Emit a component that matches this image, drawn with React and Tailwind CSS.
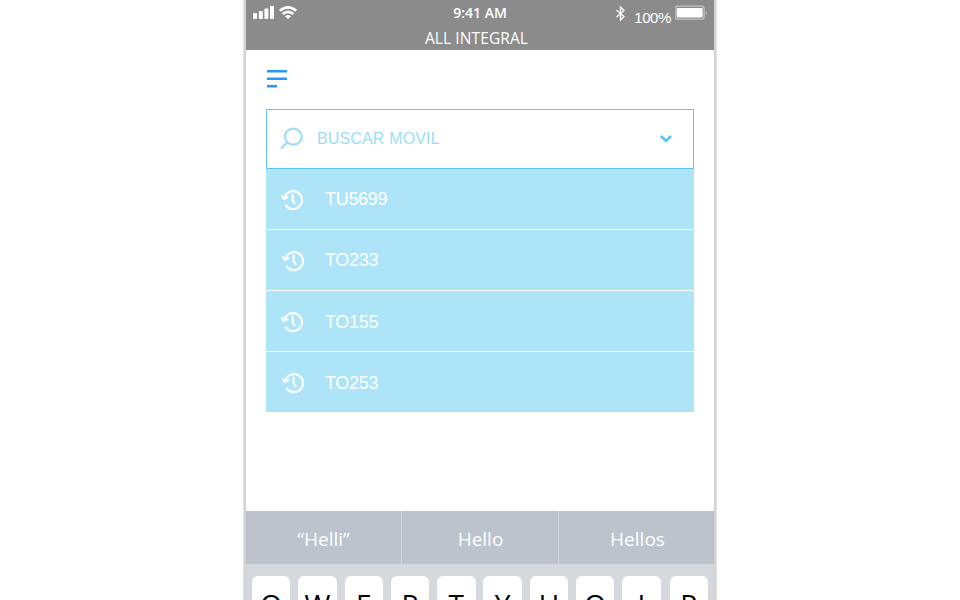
const vehicles = [
  { id: 'TU5699', icon: 'ml-[14.5px]', label: 'ml-[22.5px]' },
  { id: 'TO233', icon: 'ml-4', label: 'ml-[21px]' },
  { id: 'TO155', icon: 'ml-[14.5px]', label: 'ml-[22.5px] pt-[2px]' },
  { id: 'TO253', icon: 'ml-4', label: 'ml-[21px] pt-[2px]' },
];

const keys = ['Q', 'W', 'E', 'R', 'T', 'Y', 'U', 'O', 'I', 'P'];

function HistoryIcon({ className }) {
  return (
    <svg className={`mt-[2px] h-[22px] w-[22px] shrink-0 ${className}`} viewBox="0 0 22 22" fill="none" stroke="#fff" strokeWidth="2.1">
      <path d="M3.3 9A9 9 0 1 1 4.4 15.9" />
      <path d="M0.4 6.5L3 9.9L7.2 7.8" />
      <path d="M11.6 4.8V11.2L14.1 14.9" />
    </svg>
  );
}

function StatusBar() {
  return (
    <header className="flex h-[50px] flex-col bg-[#8b8b8b] font-['Open_Sans','Noto_Sans',sans-serif] text-white">
      <div className="flex h-[27px]">
        <div className="flex w-[156px] items-start pt-[6px] pl-[7px]">
          <svg className="h-[13px] w-[21px]" viewBox="0 0 21 13" fill="#fff">
            <rect x="0" y="7" width="4" height="6" rx="1" />
            <rect x="5.8" y="5" width="4" height="8" rx="1" />
            <rect x="11.4" y="2.5" width="4" height="10.5" rx="1" />
            <rect x="17" y="0" width="4" height="13" rx="1" />
          </svg>
          <svg className="ml-[5px] h-[13px] w-[18px]" viewBox="0 0 18 13" fill="none" stroke="#fff" strokeWidth="2.7">
            <path d="M0.8 4.7Q9 -2.1 17.2 4.7" />
            <path d="M3.7 8.1Q9 3.5 14.3 8.1" />
            <path d="M6 10.2Q9 7.8 12 10.2L9 13Z" fill="#fff" stroke="none" />
          </svg>
        </div>
        <div className="flex w-[156px] justify-center pt-[2px]">
          <span className="text-[14px] leading-[21px] font-semibold whitespace-nowrap">9:41 AM</span>
        </div>
        <div className="flex w-[156px] justify-end pr-[6px]">
          <svg className="mt-[6px] mr-[9px] h-[15px] w-[9px]" viewBox="0 0 9 15" fill="none" stroke="#fff" strokeWidth="1.3">
            <path d="M0.5 4L8 10.5L4.5 14V1L8 4.5L0.5 11" />
          </svg>
          <span className="mt-[8px] mr-[4px] font-['Liberation_Sans',sans-serif] text-[15px] leading-5 tracking-[-0.4px] whitespace-nowrap">100%</span>
          <svg className="mt-[5px] h-[15px] w-[33px]" viewBox="0 0 33 15" fill="none">
            <rect x="0.1" y="1.2" width="29" height="13" rx="2.5" stroke="#c4c4c4" strokeWidth="1.3" />
            <rect x="1.6" y="3" width="26" height="9.6" rx="1" fill="#fff" />
            <path d="M30.8 5.3Q33 7.7 30.8 10.1Z" fill="#c4c4c4" />
          </svg>
        </div>
      </div>
      <h1 className="pt-[1px] pr-[7px] text-center text-[15.5px] leading-[21px] tracking-[0.1px]">ALL INTEGRAL</h1>
    </header>
  );
}

export default function App() {
  return (
    <div className="flex h-[600px] w-[960px] justify-center overflow-hidden bg-white">
      <div className="flex w-[474px] border-x border-[#e3e3e3]">
        <div className="w-[2px] bg-[#d3d3d3]" />
        <main className="flex h-[600px] w-[468px] shrink-0 flex-col bg-white">
          <StatusBar />

          <svg className="mt-5 ml-[21px] h-[18px] w-5 shrink-0" viewBox="0 0 20 18" fill="#2699fb">
            <rect y="0" width="20" height="2.5" />
            <rect y="7.5" width="20" height="2.5" />
            <rect y="15" width="10" height="2.5" />
          </svg>

          <section className="mt-[21px] ml-5 w-[428.4px] font-['Liberation_Sans',sans-serif]">
            <div className="flex h-[59.5px] items-center border border-[#5bc8ed] bg-white pl-[13px]">
              <svg className="h-6 w-6" viewBox="0 0 24 24" fill="none" stroke="#9adef8" strokeWidth="2.2">
                <ellipse cx="13.3" cy="9.6" rx="8.5" ry="8" />
                <path d="M7.5 15.2L0.9 21.6" strokeWidth="2.5" />
              </svg>
              <span className="ml-[13px] w-[343px] text-[16px] leading-5 tracking-[0.15px] text-[#9adef5]">BUSCAR MOVIL</span>
              <svg className="h-3 w-3" viewBox="0 0 12 12" fill="none" stroke="#54c5ee" strokeWidth="2.6">
                <path d="M0.9 3L6 8L11.1 3" />
              </svg>
            </div>
            <ul className="flex flex-col gap-[1.3px]">
              {vehicles.map(({ id, icon, label }) => (
                <li key={id} className="flex h-[60px] items-center bg-[#ade4f8]">
                  <HistoryIcon className={icon} />
                  <span className={`${label} text-[18px] leading-6 tracking-[-0.3px] text-white`}>{id}</span>
                </li>
              ))}
            </ul>
          </section>

          <section className="mt-auto h-[89px] bg-[#d5d8dd] font-['Open_Sans','Noto_Sans',sans-serif]">
            <div className="flex h-[53px] bg-[#bcc3cc] text-[19px] text-white">
              <div className="flex w-[156px] items-center justify-center border-r border-[#d5d8dd] pt-[3px]">“Helli”</div>
              <div className="flex w-[157px] items-center justify-center border-r border-[#d5d8dd] pt-[3px] pl-[1px]">Hello</div>
              <div className="flex flex-1 items-center justify-center pt-[3px] pl-[2px]">Hellos</div>
            </div>
            <div className="flex h-9 gap-[7.9px] overflow-hidden pt-3 pl-[6px]">
              {keys.map((k) => (
                <div key={k} className="h-[60px] w-[38.4px] shrink-0 rounded-[6px] bg-white pt-[9px] text-center text-[28px] leading-[38px] text-black last:ml-[1px]">
                  {k}
                </div>
              ))}
            </div>
          </section>
        </main>
        <div className="w-[2px] bg-[#d3d3d3]" />
      </div>
    </div>
  );
}
